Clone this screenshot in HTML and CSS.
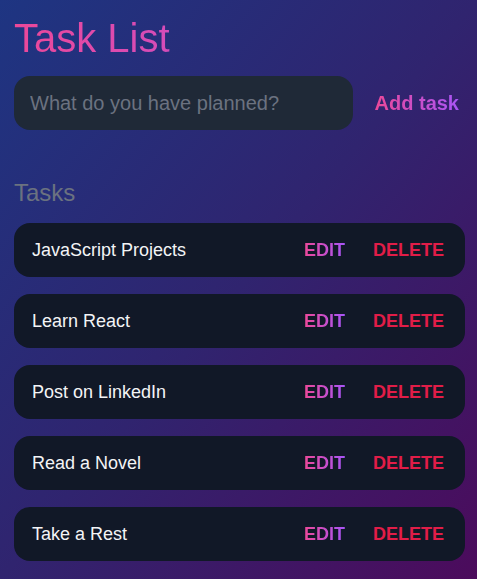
FILE: index.html
```html
<!DOCTYPE html>
<html>
<head>
<meta charset="utf-8">
<link rel="stylesheet" href="styles.css">
</head>
<body>
<main class="app">
  <h1 class="title">Task List</h1>
  <form class="new-task">
    <input class="task-input" type="text" placeholder="What do you have planned?">
    <button class="add-btn" type="button"><span class="grad-text">Add task</span></button>
  </form>
  <h2 class="section-title">Tasks</h2>
  <ul class="tasks">
    <li class="task"><span class="task-name">JavaScript Projects</span><div class="actions"><button class="edit"><span class="grad-text">EDIT</span></button><button class="delete">DELETE</button></div></li>
    <li class="task"><span class="task-name">Learn React</span><div class="actions"><button class="edit"><span class="grad-text">EDIT</span></button><button class="delete">DELETE</button></div></li>
    <li class="task"><span class="task-name">Post on LinkedIn</span><div class="actions"><button class="edit"><span class="grad-text">EDIT</span></button><button class="delete">DELETE</button></div></li>
    <li class="task"><span class="task-name">Read a Novel</span><div class="actions"><button class="edit"><span class="grad-text">EDIT</span></button><button class="delete">DELETE</button></div></li>
    <li class="task"><span class="task-name">Take a Rest</span><div class="actions"><button class="edit"><span class="grad-text">EDIT</span></button><button class="delete">DELETE</button></div></li>
  </ul>
</main>
</body>
</html>
```

FILE: styles.css
```css
* { box-sizing: border-box; }
html, body { height: 100%; }
body {
  margin: 0;
  font-family: "Liberation Sans", Arial, sans-serif;
  background: linear-gradient(to bottom right, #1e3582 0%, #30246f 50%, #4c0b5c 100%);
  color: #f3f4f6;
  overflow: hidden;
}
.app {
  padding: 14px 12px 0 14px;
}
.title {
  margin: 0;
  font-size: 40px;
  font-weight: 400;
  line-height: 48px;
  background: linear-gradient(to right, #ec4899, #a855f7);
  -webkit-background-clip: text;
  background-clip: text;
  color: transparent;
}
.new-task {
  display: flex;
  align-items: center;
  gap: 22px;
  margin-top: 14px;
}
.task-input {
  flex: 1;
  height: 54px;
  border: none;
  border-radius: 16px;
  background: #1f2937;
  padding: 0 16px;
  font-family: inherit;
  font-size: 20px;
  color: #e5e7eb;
  outline: none;
}
.task-input::placeholder { color: #6b7280; }
.add-btn {
  background: none;
  border: none;
  padding: 0 6px 0 0;
  font-family: inherit;
  font-size: 20px;
  font-weight: 700;
  cursor: pointer;
}
.grad-text {
  background: linear-gradient(to right, #ec4899, #a855f7);
  -webkit-background-clip: text;
  background-clip: text;
  color: transparent;
}
.section-title {
  margin: 49px 0 0;
  font-size: 24px;
  font-weight: 400;
  line-height: 28px;
  color: #6b7280;
}
.tasks {
  list-style: none;
  margin: 16px 0 0;
  padding: 0;
  display: flex;
  flex-direction: column;
  gap: 17px;
}
.task {
  height: 54px;
  background: #111827;
  border-radius: 16px;
  display: flex;
  align-items: center;
  justify-content: space-between;
  padding: 0 21px 0 18px;
}
.task-name {
  font-size: 18px;
  color: #f3f4f6;
}
.actions {
  display: flex;
  gap: 28px;
}
.edit, .delete {
  background: none;
  border: none;
  padding: 0;
  font-family: inherit;
  font-size: 18px;
  font-weight: 700;
  text-transform: uppercase;
  cursor: pointer;
}
.delete { color: #e11d48; }
```
